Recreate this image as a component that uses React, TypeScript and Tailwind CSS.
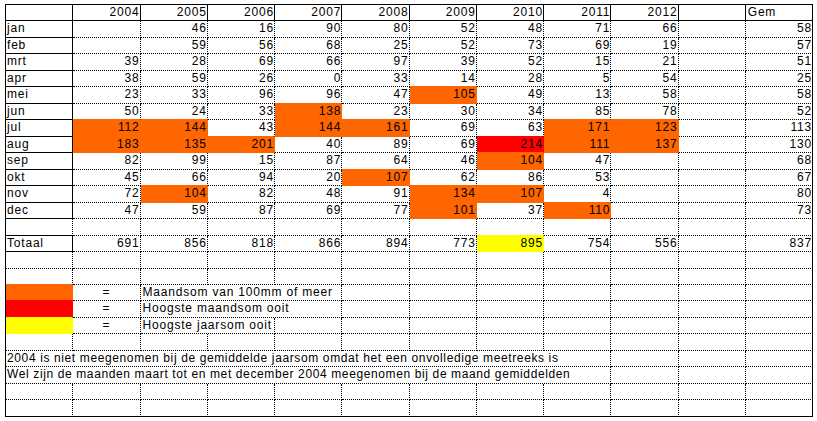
import React from "react";

type Fill = "o" | "r" | "y";
type Cell = {
  t: string;
  a: "l" | "r" | "c" | "L";
  f?: Fill;
  s: number;
  solidR?: boolean;
  solidB?: boolean;
};

const BG: Record<Fill, string> = {
  o: "bg-[#ff6600]",
  r: "bg-[#ff0000]",
  y: "bg-[#ffff00]",
};
const BR: Record<Fill, string> = {
  o: "border-r-[#ff6600] [border-right-style:solid]",
  r: "border-r-[#ff0000] [border-right-style:solid]",
  y: "border-r-[#ffff00] [border-right-style:solid]",
};
const BB: Record<Fill, string> = {
  o: "border-b-[#ff6600] [border-bottom-style:solid]",
  r: "border-b-[#ff0000] [border-bottom-style:solid]",
  y: "border-b-[#ffff00] [border-bottom-style:solid]",
};
const ALIGN: Record<string, string> = {
  l: "text-left pl-px",
  L: "text-left pl-[2px]",
  r: "text-right pr-0",
  c: "text-center",
};

const years = ["2004", "2005", "2006", "2007", "2008", "2009", "2010", "2011", "2012"];

const monthData: [string, string[], string][] = [
  ["jan", ["", "46", "16", "90", "80", "52", "48", "71", "66"], "58"],
  ["feb", ["", "59", "56", "68", "25", "52", "73", "69", "19"], "57"],
  ["mrt", ["39", "28", "69", "66", "97", "39", "52", "15", "21"], "51"],
  ["apr", ["38", "59", "26", "0", "33", "14", "28", "5", "54"], "25"],
  ["mei", ["23", "33", "96", "96", "47", "105o", "49", "13", "58"], "58"],
  ["jun", ["50", "24", "33", "138o", "23", "30", "34", "85", "78"], "52"],
  ["jul", ["112o", "144o", "43", "144o", "161o", "69", "63", "171o", "123o"], "113"],
  ["aug", ["183o", "135o", "201o", "40", "89", "69", "214r", "111o", "137o"], "130"],
  ["sep", ["82", "99", "15", "87", "64", "46", "104o", "47", ""], "68"],
  ["okt", ["45", "66", "94", "20", "107o", "62", "86", "53", ""], "67"],
  ["nov", ["72", "104o", "82", "48", "91", "134o", "107o", "4", ""], "80"],
  ["dec", ["47", "59", "87", "69", "77", "101o", "37", "110o", ""], "73"],
];

function parseVal(v: string): Cell {
  const last = v.slice(-1);
  if (last === "o" || last === "r" || last === "y") {
    return { t: v.slice(0, -1), a: "r", f: last as Fill, s: 1 };
  }
  return { t: v, a: "r", s: 1 };
}

function empties(n: number): Cell[] {
  return Array.from({ length: n }, () => ({ t: "", a: "r" as const, s: 1 }));
}

function buildRows(): Cell[][] {
  const rows: Cell[][] = [];
  rows.push([
    { t: "", a: "l", s: 1, solidR: true, solidB: true },
    ...years.map((y) => ({ t: y, a: "r" as const, s: 1, solidR: true, solidB: true })),
    { t: "", a: "l", s: 1, solidR: true, solidB: true },
    { t: "Gem", a: "L", s: 1, solidR: true, solidB: true },
  ]);
  for (const [m, vals, gem] of monthData) {
    rows.push([
      { t: m, a: "l", s: 1, solidR: true, solidB: true },
      ...vals.map(parseVal),
      { t: "", a: "r", s: 1 },
      { t: gem, a: "r", s: 1 },
    ]);
  }
  rows.push([{ t: "", a: "l", s: 1, solidB: true }, ...empties(11)]);
  rows.push([
    { t: "Totaal", a: "l", s: 1, solidR: true, solidB: true },
    ...["691", "856", "818", "866", "894", "773", "895y", "754", "556"].map(parseVal),
    { t: "", a: "r", s: 1 },
    { t: "837", a: "r", s: 1 },
  ]);
  rows.push(empties(12));
  rows.push(empties(12));
  rows.push([
    { t: "", a: "l", f: "o", s: 1 },
    { t: "=", a: "c", s: 1 },
    { t: "Maandsom van 100mm of meer", a: "L", s: 3 },
    ...empties(7),
  ]);
  rows.push([
    { t: "", a: "l", f: "r", s: 1 },
    { t: "=", a: "c", s: 1 },
    { t: "Hoogste maandsom ooit", a: "L", s: 3 },
    ...empties(7),
  ]);
  rows.push([
    { t: "", a: "l", f: "y", s: 1 },
    { t: "=", a: "c", s: 1 },
    { t: "Hoogste jaarsom ooit", a: "L", s: 2 },
    ...empties(8),
  ]);
  rows.push(empties(12));
  rows.push([
    {
      t: "2004 is niet meegenomen bij de gemiddelde jaarsom omdat het een onvolledige meetreeks is",
      a: "l",
      s: 9,
    },
    ...empties(3),
  ]);
  rows.push([
    {
      t: "Wel zijn de maanden maart tot en met december 2004 meegenomen bij de maand gemiddelden",
      a: "l",
      s: 9,
    },
    ...empties(3),
  ]);
  rows.push(empties(12));
  rows.push(empties(12));
  return rows;
}

function cellAt(row: Cell[] | undefined, col: number): Cell | undefined {
  if (!row) return undefined;
  let c = 0;
  for (const cell of row) {
    if (c === col) return cell;
    c += cell.s;
  }
  return undefined;
}

export default function App() {
  const rows = buildRows();
  const nRows = rows.length;
  const out: React.ReactNode[] = [];
  rows.forEach((row, ri) => {
    let col = 0;
    row.forEach((cell, ci) => {
      const start = col;
      const end = col + cell.s;
      col = end;
      const isLastCol = end === 12;
      const isLastRow = ri === nRows - 1;
      const below = cellAt(rows[ri + 1], start);
      const cls: string[] = [
        "whitespace-nowrap overflow-visible leading-[15px] border-r border-b min-w-0",
        ALIGN[cell.a],
      ];
      if (isLastCol) cls.push("border-r-black [border-right-style:solid]");
      else if (cell.f) cls.push(BR[cell.f]);
      else if (cell.solidR) cls.push("border-r-black [border-right-style:solid]");
      else cls.push("border-r-black [border-right-style:dotted]");
      if (isLastRow) cls.push("border-b-black [border-bottom-style:solid]");
      else if (below && below.f && cell.s === 1) cls.push(BB[below.f]);
      else if (cell.f) cls.push(BB[cell.f]);
      else if (cell.solidB) cls.push("border-b-black [border-bottom-style:solid]");
      else cls.push("border-b-black [border-bottom-style:dotted]");
      if (cell.f) cls.push(BG[cell.f]);
      const spanCls =
        cell.s === 9
          ? "col-span-9"
          : cell.s === 3
          ? "col-span-3"
          : cell.s === 2
          ? "col-span-2"
          : "col-span-1";
      cls.push(spanCls);
      if (cell.s === 9) cls.push("tracking-[0.62px]");
      out.push(
        <div key={`${ri}-${ci}`} className={cls.join(" ")}>
          {cell.t}
        </div>
      );
    });
  });

  return (
    <div className="w-[817px] h-[421px] bg-white overflow-hidden">
      <div className="pl-[5px] pt-[4px]">
        <div
          className="grid w-fit grid-cols-[repeat(12,67.25px)] grid-rows-[repeat(25,16.48px)] border-l border-t border-black text-black text-[12px] tracking-[0.8px]"
          style={{ fontFamily: '"Liberation Sans", Arial, sans-serif' }}
        >
          {out}
        </div>
      </div>
    </div>
  );
}
